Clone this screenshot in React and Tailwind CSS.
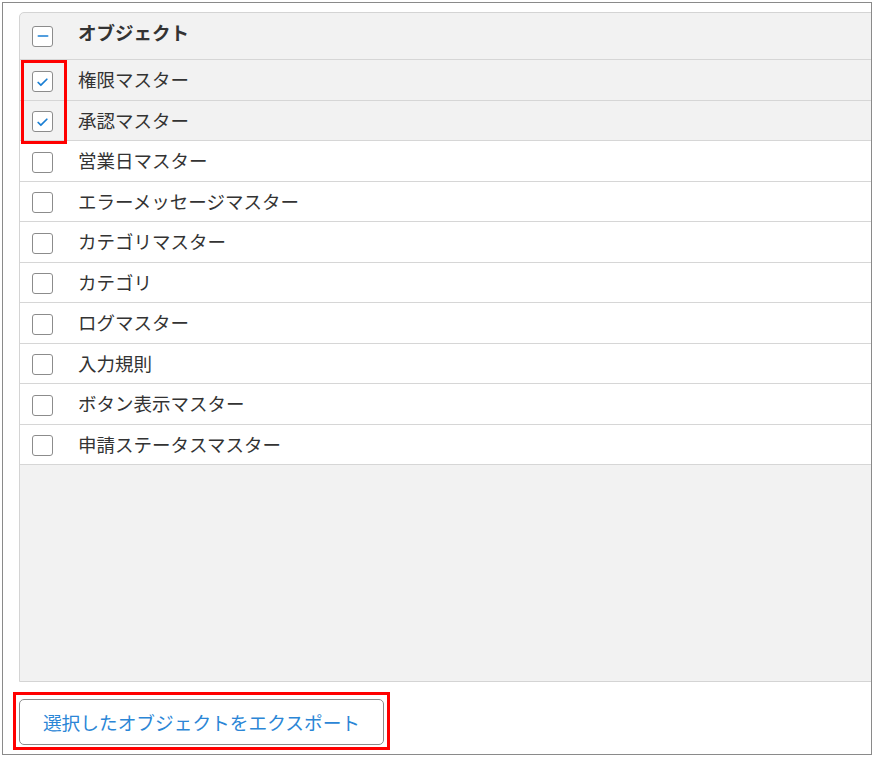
import { Check, Minus } from 'lucide-react';

const items = [
  { name: '権限マスター', checked: true },
  { name: '承認マスター', checked: true },
  { name: '営業日マスター', checked: false },
  { name: 'エラーメッセージマスター', checked: false },
  { name: 'カテゴリマスター', checked: false },
  { name: 'カテゴリ', checked: false },
  { name: 'ログマスター', checked: false },
  { name: '入力規則', checked: false },
  { name: 'ボタン表示マスター', checked: false },
  { name: '申請ステータスマスター', checked: false },
];

function Box({ children }) {
  return (
    <span className="flex h-[21px] w-[21px] shrink-0 items-center justify-center rounded-[3px] border border-[#8c8c8c] bg-white">
      {children}
    </span>
  );
}

export default function App() {
  return (
    <div
      className="relative h-[757px] w-[874px] bg-white pl-[2px] pt-[2px]"
      style={{ fontFamily: '"Noto Sans CJK JP", "Noto Sans", sans-serif' }}
    >
      <div className="flex h-[753px] w-[870px] flex-col overflow-hidden border border-[#8a8a8a] pl-[16px] pt-[9px]">
        {/* Object list panel */}
        <div className="flex h-[670px] w-[900px] flex-col rounded-tl-[5px] border border-[#d4d4d4] bg-[#f2f2f2]">
          <div className="flex h-[47px] items-center border-b border-[#d6d6d6] pl-[12px]">
            <Box>
              <Minus size={16} strokeWidth={2.5} className="text-[#1a7fd4]" />
            </Box>
            <span className="ml-[25px] pb-[6px] text-[18.5px] font-bold text-[#333]">オブジェクト</span>
          </div>
          {items.map((item, i) => (
            <div
              key={item.name}
              className={`flex items-center border-b border-[#d6d6d6] pl-[12px] pt-[2px] ${
                i % 2 === 0 ? 'h-[41px]' : 'h-[40px]'
              } ${item.checked ? 'bg-[#f2f2f2]' : 'bg-white'}`}
            >
              <Box>
                {item.checked && (
                  <Check size={13} strokeWidth={3.2} className="mt-[2px] text-[#1a7fd4]" />
                )}
              </Box>
              <span className="ml-[25px] pb-[2px] text-[18.5px] text-[#333]">{item.name}</span>
            </div>
          ))}
        </div>

        {/* Export button */}
        <div className="pt-[17px]">
          <button className="h-[46px] w-[365px] rounded-[5px] border border-[#8c8c8c] bg-white text-[18.7px] text-[#2b86d6]">
            選択したオブジェクトをエクスポート
          </button>
        </div>
      </div>

      {/* Highlight boxes */}
      <div className="absolute left-[21px] top-[60px] h-[84px] w-[46px] border-[3px] border-[#ff0000]" />
      <div className="absolute left-[13px] top-[692px] h-[58px] w-[377px] border-[3px] border-[#ff0000]" />
    </div>
  );
}
